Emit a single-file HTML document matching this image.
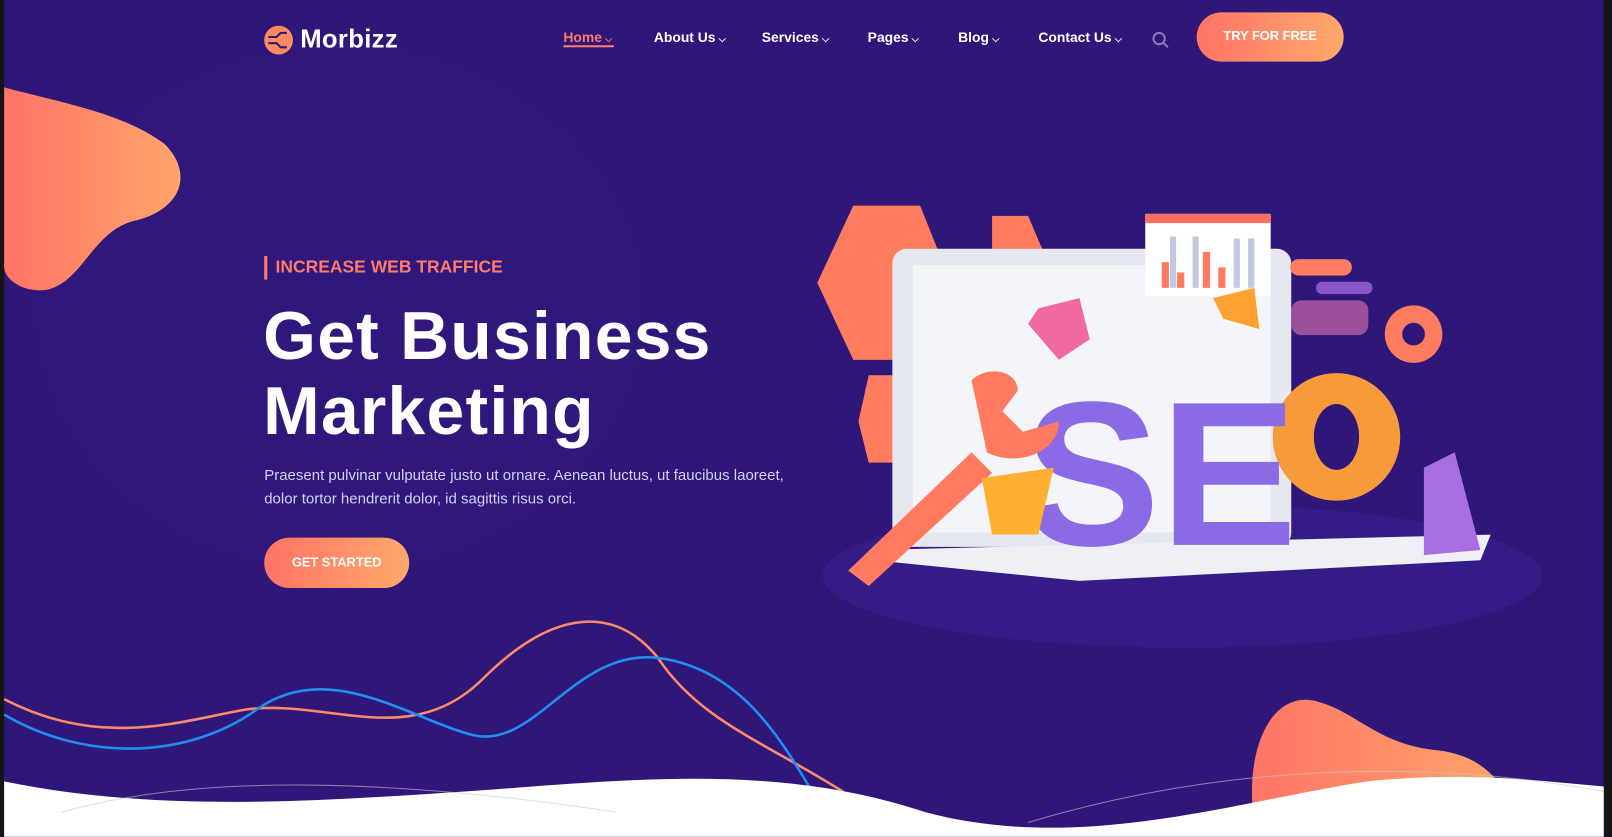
<!DOCTYPE html>
<html><head><meta charset="utf-8"><style>
html,body{margin:0;padding:0;width:1612px;height:837px;overflow:hidden;background:#111;}
#w{position:absolute;left:0;top:0;width:1568px;height:814px;transform:scale(1.02806);transform-origin:0 0;overflow:hidden;background:#2f1679;font-family:"Liberation Sans",sans-serif;}
.nav{position:absolute;top:29px;color:#fff;font-size:13.5px;font-weight:bold;}
.nav span{font-size:9px;margin-left:3px;}
</style></head><body><div id="w">
<svg width="1568" height="814" style="position:absolute;left:0;top:0">
<defs>
<linearGradient id="og" x1="0" x2="1"><stop offset="0" stop-color="#ff7466"/><stop offset="1" stop-color="#ffa56a"/></linearGradient>
</defs>
<rect x="0" y="0" width="4" height="814" fill="#151515"/>
<rect x="1560" y="0" width="8" height="814" fill="#151515"/>
<ellipse cx="330" cy="300" rx="300" ry="260" fill="#331a80" opacity=".3"/>
<ellipse cx="1150" cy="560" rx="350" ry="70" fill="#3a1f90" opacity=".6"/>
<path d="M4 85 C60 100 120 110 160 140 C190 170 175 205 130 215 C90 225 80 275 45 282 C20 285 4 270 4 260 Z" fill="url(#og)"/>
<path d="M1218 780 C1215 720 1240 672 1280 682 C1320 692 1340 725 1400 730 C1440 735 1465 760 1468 790 L1218 800Z" fill="url(#og)"/>
<path d="M4 680 C100 730 180 700 240 690 C320 680 400 730 470 660 C540 590 600 590 640 640 C680 700 740 720 820 770" stroke="#ff8a6a" stroke-width="2.5" fill="none"/>
<path d="M4 695 C80 740 180 740 250 690 C320 640 400 700 460 715 C520 730 560 630 640 640 C720 650 760 720 790 770" stroke="#1f8ef0" stroke-width="2.5" fill="none"/>
<path d="M4 760 C150 790 300 780 450 770 C600 760 750 740 900 790 C1050 830 1200 780 1330 760 C1430 750 1500 760 1560 765 L1560 814 L4 814Z" fill="#fff"/>
<path d="M60 790 C200 750 400 760 600 790" stroke="#ccc" fill="none" opacity=".6"/>
<path d="M1000 800 C1200 740 1400 740 1560 770" stroke="#ccc" fill="none" opacity=".6"/>
<polygon points="830,200 895,200 925,275 895,350 830,350 795,275" fill="#ff7d5e"/>
<polygon points="965,210 1000,210 1015,245 965,245" fill="#ff7d5e"/>
<polygon points="845,365 870,365 870,450 845,450 835,410" fill="#ff7d5e"/>
<rect x="868" y="242" width="388" height="290" rx="14" fill="#e6e8f0"/>
<rect x="888" y="258" width="348" height="260" fill="#f4f5fa"/>
<path d="M850 535 L1450 520 L1440 545 L1050 565 L850 545Z" fill="#eef0f6"/>
<rect x="1114" y="208" width="122" height="80" fill="#fff"/>
<rect x="1114" y="208" width="122" height="9" fill="#ff6f5e"/>
<g fill="#ff7a5e"><rect x="1130" y="255" width="7" height="25"/><rect x="1145" y="265" width="7" height="15"/><rect x="1170" y="245" width="7" height="35"/><rect x="1185" y="260" width="7" height="20"/></g>
<g fill="#c5c7e0"><rect x="1138" y="230" width="6" height="50"/><rect x="1160" y="230" width="6" height="50"/><rect x="1200" y="232" width="6" height="48"/><rect x="1214" y="232" width="6" height="48"/></g>
<rect x="1255" y="252" width="60" height="16" rx="8" fill="#ff7d5e"/>
<rect x="1280" y="274" width="55" height="12" rx="6" fill="#8a55c8"/>
<rect x="1256" y="292" width="75" height="34" rx="10" fill="#9a4f9a"/>
<circle cx="1375" cy="325" r="28" fill="#ff7d5e"/><circle cx="1375" cy="325" r="11" fill="#2f1679"/>
<circle cx="1300" cy="425" r="62" fill="#f79a3a"/><ellipse cx="1300" cy="425" rx="22" ry="32" fill="#2f1679"/>
<text x="995" y="530" font-family="Liberation Sans" font-weight="bold" font-size="200" fill="#8b6ae6">SE</text>
<path d="M825 555 L945 440 L965 460 L845 570 Z" fill="#ff7a5e"/>
<path d="M945 370 C960 355 990 360 990 380 L975 400 L995 420 L1030 410 C1030 440 990 455 960 440 Z" fill="#ff7a5e"/>
<path d="M1010 300 L1050 290 L1060 330 L1030 350 L1000 315Z" fill="#f06aa0"/>
<path d="M1180 290 L1220 280 L1225 320 L1190 310Z" fill="#ffa033"/>
<path d="M955 465 L1025 455 L1010 520 L965 520Z" fill="#ffb030"/>
<path d="M1385 455 L1415 440 L1440 535 L1385 540Z" fill="#a86de0"/>
</svg>
<svg style="position:absolute;left:256px;top:24px" width="30" height="30"><circle cx="15" cy="15" r="14" fill="#ff8a60"/><path d="M5 12h8l4-4h6M5 18h8l4 4h6" stroke="#2f1679" stroke-width="2" fill="none"/></svg>
<div style="position:absolute;left:292px;top:24px;color:#fff;font-size:25px;font-weight:bold;letter-spacing:.3px">Morbizz</div>
<div class="nav" style="left:548px;color:#ff7b6a">Home<span>⌵</span></div>
<div style="position:absolute;left:548px;top:44px;width:49px;height:2px;background:#ff7b6a"></div>
<div class="nav" style="left:636px">About Us<span>⌵</span></div>
<div class="nav" style="left:741px">Services<span>⌵</span></div>
<div class="nav" style="left:844px">Pages<span>⌵</span></div>
<div class="nav" style="left:932px">Blog<span>⌵</span></div>
<div class="nav" style="left:1010px">Contact Us<span>⌵</span></div>
<svg style="position:absolute;left:1120px;top:30px" width="18" height="18"><circle cx="7.5" cy="7.5" r="5.5" stroke="#8a7ab8" stroke-width="2" fill="none"/><path d="M12 12l4 4" stroke="#8a7ab8" stroke-width="2"/></svg>
<div style="position:absolute;left:1164px;top:12px;width:143px;height:48px;border-radius:24px;background:linear-gradient(90deg,#ff7466,#ffa86c);color:#fff;font-size:12.5px;font-weight:bold;line-height:47px;text-align:center;">TRY FOR FREE</div>
<div style="position:absolute;left:257px;top:249px;width:3px;height:23px;background:#ff7b6a"></div>
<div style="position:absolute;left:268px;top:250px;color:#ff7b6a;font-size:17px;font-weight:bold;">INCREASE WEB TRAFFICE</div>
<div style="position:absolute;left:256px;top:290px;color:#fff;font-size:66px;font-weight:bold;line-height:73px;letter-spacing:1.2px;">Get Business<br>Marketing</div>
<div style="position:absolute;left:257px;top:452px;color:#d8d0f0;font-size:14.6px;line-height:23px;">Praesent pulvinar vulputate justo ut ornare. Aenean luctus, ut faucibus laoreet,<br>dolor tortor hendrerit dolor, id sagittis risus orci.</div>
<div style="position:absolute;left:257px;top:523px;width:141px;height:49px;border-radius:25px;background:linear-gradient(90deg,#ff7466,#ffa86c);color:#fff;font-size:12.5px;font-weight:bold;line-height:49px;text-align:center;">GET STARTED</div>
</div></body></html>
